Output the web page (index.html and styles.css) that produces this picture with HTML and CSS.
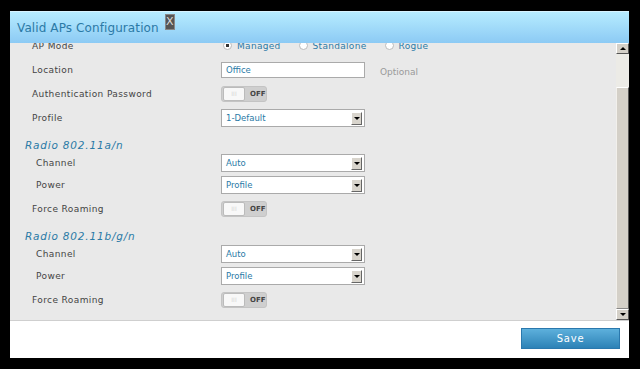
FILE: index.html
```html
<!DOCTYPE html>
<html lang="en">
<head>
    <meta charset="UTF-8">
    <title>Valid APs Configuration</title>
    <link rel="stylesheet" href="styles.css">
</head>
<body>
    <div class="dialog">
        <div class="header">
            <span class="title">Valid APs Configuration</span>
            <span class="close">X</span>
        </div>
        <div class="body">
            <div class="content">
                <div class="form">
                    <div class="row top">
                        <label>AP Mode</label>
                        <div class="radios">
                            <span class="radio checked"></span><span class="radio-text">Managed</span>
                            <span class="radio"></span><span class="radio-text">Standalone</span>
                            <span class="radio"></span><span class="radio-text">Rogue</span>
                        </div>
                    </div>
                    <div class="row">
                        <label>Location</label>
                        <div class="text-input">Office</div>
                        <span class="hint">Optional</span>
                    </div>
                    <div class="row">
                        <label>Authentication Password</label>
                        <div class="toggle"><span class="knob">III</span><span class="state">OFF</span></div>
                    </div>
                    <div class="row">
                        <label>Profile</label>
                        <div class="select">1-Default<span class="arrow"></span></div>
                    </div>

                    <div class="section">Radio 802.11a/n</div>
                    <div class="row first sub">
                        <label>Channel</label>
                        <div class="select">Auto<span class="arrow"></span></div>
                    </div>
                    <div class="row sub">
                        <label>Power</label>
                        <div class="select">Profile<span class="arrow"></span></div>
                    </div>
                    <div class="row">
                        <label>Force Roaming</label>
                        <div class="toggle"><span class="knob">III</span><span class="state">OFF</span></div>
                    </div>

                    <div class="section">Radio 802.11b/g/n</div>
                    <div class="row first sub">
                        <label>Channel</label>
                        <div class="select">Auto<span class="arrow"></span></div>
                    </div>
                    <div class="row sub">
                        <label>Power</label>
                        <div class="select">Profile<span class="arrow"></span></div>
                    </div>
                    <div class="row">
                        <label>Force Roaming</label>
                        <div class="toggle"><span class="knob">III</span><span class="state">OFF</span></div>
                    </div>
                </div>
            </div>
            <div class="scrollbar">
                <div class="sb-button up"></div>
                <div class="sb-track"></div>
                <div class="sb-thumb"></div>
                <div class="sb-button down"></div>
            </div>
        </div>
        <div class="footer">
            <button type="button" class="save-button">Save</button>
        </div>
    </div>
</body>
</html>
```

FILE: styles.css
```css
body {
    background-color: #000;
    margin: 0;
    padding: 11px 11px 0 10px;
    font-family: "DejaVu Sans", Verdana, sans-serif;
}
.dialog {
    width: 619px;
    height: 347px;
    background-color: #fff;
    display: flex;
    flex-direction: column;
}
.header {
    height: 32px;
    background: linear-gradient(#b6ecff, #8ccaf4);
    border-top: 1px solid #d8f4ff;
    box-sizing: border-box;
    display: flex;
    align-items: center;
    padding-left: 7px;
}
.title {
    font-size: 12px;
    color: #2b7aa6;
    letter-spacing: 0.1px;
}
.close {
    align-self: flex-start;
    margin-top: 2px;
    margin-left: 6px;
    background-color: #555;
    color: #ddd;
    font-size: 11px;
    line-height: 14px;
    width: 8px;
    text-align: center;
    border: 1px solid #888;
}
.body {
    height: 277px;
    display: flex;
    background-color: #e9e9e9;
    border-bottom: 1px solid #cfcfcf;
}
.content {
    flex: 1;
    overflow: hidden;
}
.form {
    margin-top: -10px;
    padding-left: 22px;
}
.row {
    height: 24px;
    display: flex;
    align-items: center;
}
.row.top {
    height: 25px;
}
.row label {
    width: 189px;
    font-size: 9px;
    color: #444;
    letter-spacing: 0.4px;
}
.row.sub label {
    padding-left: 4px;
    width: 185px;
}
.row.first {
    height: 20px;
}
.section {
    margin: 7px 0 0 -7px;
    height: 16px;
    line-height: 16px;
    font-size: 10.5px;
    font-style: italic;
    color: #2b7aa6;
    letter-spacing: 0.8px;
}
.radios {
    display: flex;
    align-items: center;
    font-size: 9px;
    color: #2b7aa6;
    letter-spacing: 0.3px;
}
.radio {
    width: 9px;
    height: 9px;
    border-radius: 50%;
    background-color: #fff;
    border: 1px solid #bbb;
    box-sizing: border-box;
    margin: 0 5px 0 2px;
}
.radio.checked {
    background: radial-gradient(#333 30%, #fff 40%);
}
.radio-text {
    margin-right: 16px;
}
.text-input, .select {
    width: 144px;
    height: 16px;
    box-sizing: border-box;
    background-color: #fff;
    border: 1px solid #aaa;
    font-size: 8.5px;
    color: #2b7aa6;
    line-height: 14px;
    padding-left: 4px;
    position: relative;
}
.select {
    height: 18px;
    line-height: 17px;
}
.arrow {
    position: absolute;
    right: 2px;
    top: 2px;
    width: 9px;
    height: 11px;
    background-color: #d8d4cc;
    border-right: 1px solid #666;
    border-bottom: 1px solid #666;
    border-top: 1px solid #fff;
    border-left: 1px solid #fff;
}
.arrow::after {
    content: "";
    position: absolute;
    left: 2px;
    top: 4px;
    border-left: 3px solid transparent;
    border-right: 3px solid transparent;
    border-top: 3px solid #000;
}
.hint {
    margin-left: 15px;
    margin-top: 3px;
    font-size: 9px;
    color: #999;
}
.toggle {
    width: 46px;
    height: 16px;
    box-sizing: border-box;
    border: 1px solid #c4c4c4;
    border-radius: 3px;
    background-color: #cfcfcf;
    display: flex;
    align-items: center;
}
.knob {
    width: 20px;
    height: 12px;
    margin-left: 1px;
    background-color: #f8f8f8;
    border: 1px solid #bbb;
    border-radius: 2px;
    font-size: 6px;
    color: #d4d4d4;
    text-align: center;
    line-height: 12px;
}
.state {
    margin-left: 5px;
    font-size: 7px;
    font-weight: bold;
    color: #444;
}
.scrollbar {
    width: 13px;
    display: flex;
    flex-direction: column;
}
.sb-button {
    height: 11px;
    background-color: #d4d0c8;
    border-top: 1px solid #fff;
    border-left: 1px solid #fff;
    border-right: 1px solid #555;
    border-bottom: 1px solid #555;
    box-sizing: border-box;
    position: relative;
}
.sb-button::after {
    content: "";
    position: absolute;
    left: 3px;
    top: 3px;
    border-left: 3px solid transparent;
    border-right: 3px solid transparent;
}
.sb-button.up::after {
    border-bottom: 3px solid #000;
}
.sb-button.down::after {
    border-top: 3px solid #000;
}
.sb-track {
    height: 33px;
    background-color: #ecebe6;
}
.sb-thumb {
    flex: 1;
    background-color: #d4d0c8;
    border-top: 1px solid #fff;
    border-left: 1px solid #f2f0ec;
    border-right: 1px solid #555;
    border-bottom: 1px solid #888;
}
.footer {
    flex: 1;
    display: flex;
    justify-content: flex-end;
    align-items: flex-start;
    padding: 7px 9px 0 0;
}
.save-button {
    width: 99px;
    height: 21px;
    background: linear-gradient(#5db0dc, #2d82b6);
    border: 1px solid #2a78ad;
    color: #fff;
    font-family: "DejaVu Sans", Verdana, sans-serif;
    font-size: 10px;
    letter-spacing: 0.8px;
    cursor: pointer;
}
```
